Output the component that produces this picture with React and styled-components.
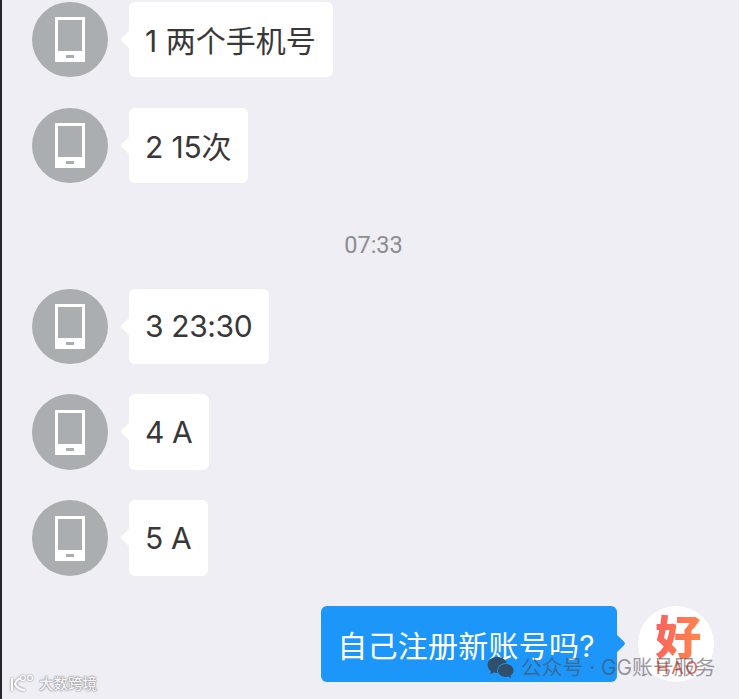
import styled, { createGlobalStyle } from "styled-components";

const GlobalStyle = createGlobalStyle`
  html, body {
    margin: 0;
    padding: 0;
    background: #efeef4;
  }
  body {
    font-family: Inter, "Noto Sans CJK SC", sans-serif;
  }
`;

const Page = styled.div`
  position: relative;
  width: 739px;
  height: 699px;
  box-sizing: border-box;
  overflow: hidden;
  padding: 1.7px 25px 0 30px;
  background: #efeef4;
  border-left: 2px solid #26262b;
`;

const Row = styled.div`
  display: flex;
  flex-direction: ${(p) => (p.$mine ? "row-reverse" : "row")};
  gap: 21.5px;
  margin-bottom: 30.3px;
`;

const Avatar = styled.div`
  flex: none;
  width: 75.6px;
  height: 75.6px;
  border-radius: 50%;
  background: ${(p) => p.$bg || "#abaeb1"};
  display: flex;
  align-items: center;
  justify-content: center;
`;

const Bubble = styled.div`
  position: relative;
  height: 75.6px;
  box-sizing: border-box;
  padding: ${(p) => (p.$mine ? "0 22px 0 16px" : "0 17px 0 16px")};
  display: flex;
  align-items: center;
  border-radius: 6px;
  font-size: 30px;
  letter-spacing: ${(p) => (p.$mine ? "0.25px" : `${p.$tracking || 0}px`)};
  color: ${(p) => (p.$mine ? "#ffffff" : "#383838")};
  background: ${(p) => (p.$mine ? "#1d96fa" : "#ffffff")};
  white-space: nowrap;

  &::after {
    content: "";
    position: absolute;
    top: 31px;
    ${(p) => (p.$mine ? "right: -6px;" : "left: -6px;")}
    width: 13px;
    height: 13px;
    border-radius: 2px;
    background: inherit;
    transform: rotate(45deg);
  }
`;

const Time = styled.div`
  height: 30px;
  margin: 47px -25px 28.4px -30px;
  padding-left: 6px;
  text-align: center;
  font-family: Roboto, sans-serif;
  font-size: 23.5px;
  line-height: 30px;
  color: #8d8d92;
`;

const LogoMark = styled.div`
  display: flex;
  flex-direction: column;
  align-items: center;
  padding-left: 4px;
`;

const LogoChar = styled.span`
  font-family: "Noto Sans CJK SC", sans-serif;
  font-weight: 900;
  font-size: 46px;
  line-height: 46px;
  padding-bottom: 2px;
  background: linear-gradient(100deg, #fb5f5f, #fd8a4c);
  -webkit-background-clip: text;
  background-clip: text;
  color: transparent;
`;

const LogoLatin = styled.span`
  font-family: Roboto, sans-serif;
  font-size: 18px;
  letter-spacing: 2.5px;
  line-height: 18px;
  color: #e8695c;
`;

const WechatMark = styled.div`
  position: absolute;
  left: 485px;
  top: 655px;
  display: flex;
  align-items: center;
  gap: 7px;
  font-size: 20.8px;
  line-height: 26px;
  color: rgba(72, 72, 76, 0.55);
  white-space: nowrap;
`;

const CornerMark = styled.div`
  position: absolute;
  left: 6px;
  top: 673px;
  display: flex;
  align-items: center;
  gap: 3px;
  font-size: 14.5px;
  font-weight: 500;
  line-height: 22px;
  color: #f6f6f8;
  text-shadow: 0 0 1px #77777c, 0 0 2px #77777c;
  white-space: nowrap;

  svg {
    filter: drop-shadow(0 0 1px #77777c);
  }
`;

const PhoneIcon = () => (
  <svg width="30" height="45" viewBox="0 0 30 45">
    <path
      fill="#fff"
      fillRule="evenodd"
      d="M0 0h30v45H0zM3 3v31h24V3zM11 38v3h8v-3z"
    />
  </svg>
);

const WechatIcon = () => (
  <svg width="27" height="25" viewBox="0 0 27 25">
    <path
      fill="#2f4f6a"
      d="M10 1C4.700 1 .5 4.500.5 9c0 2.600 1.400 4.800 3.600 6.300l-1 3 3.400-1.800c1.100.3 2.200.5 3.500.5h.7c-.3-.8-.4-1.600-.4-2.400 0-4.200 3.900-7.500 8.800-7.500h.7C19.200 3.700 15 1 10 1z"
    />
    <path
      fill="#2f4f6a"
      d="M26.500 14.500c0-3.600-3.500-6.500-7.700-6.500s-7.800 2.900-7.800 6.500 3.500 6.500 7.800 6.500c.9 0 1.800-.1 2.600-.4l2.800 1.600-.8-2.600c1.900-1.200 3.100-3 3.100-5.100z"
    />
  </svg>
);

const CornerIcon = () => (
  <svg width="28" height="20" viewBox="0 0 28 20" fill="none" stroke="#fff" strokeWidth="2.200">
    <path d="M4 4v13M13 4c-3 1-5 3-6 6 2 4 5 6 10 6" />
    <circle cx="15" cy="4" r="2.500" strokeWidth="1.200" />
    <circle cx="22" cy="4" r="2.500" strokeWidth="1.200" />
  </svg>
);

const messages = [
  { text: "1 两个手机号", tracking: 0 },
  { text: "2 15次", tracking: -0.2 },
];
const laterMessages = [
  { text: "3 23:30", tracking: -0.4 },
  { text: "4 A", tracking: -0.4 },
  { text: "5 A", tracking: -0.4 },
];

const Message = ({ text, tracking }) => (
  <Row>
    <Avatar>
      <PhoneIcon />
    </Avatar>
    <Bubble $tracking={tracking}>{text}</Bubble>
  </Row>
);

export default function App() {
  return (
    <Page>
      <GlobalStyle />
      {messages.map((m) => (
        <Message key={m.text} {...m} />
      ))}
      <Time>07:33</Time>
      {laterMessages.map((m) => (
        <Message key={m.text} {...m} />
      ))}
      <Row $mine>
        <Avatar $bg="#ffffff">
          <LogoMark>
            <LogoChar>好</LogoChar>
            <LogoLatin>HAO</LogoLatin>
          </LogoMark>
        </Avatar>
        <Bubble $mine>自己注册新账号吗?</Bubble>
      </Row>
      <WechatMark>
        <WechatIcon />
        <span>公众号 · GG账号服务</span>
      </WechatMark>
      <CornerMark>
        <CornerIcon />
        <span>大数跨境</span>
      </CornerMark>
    </Page>
  );
}
